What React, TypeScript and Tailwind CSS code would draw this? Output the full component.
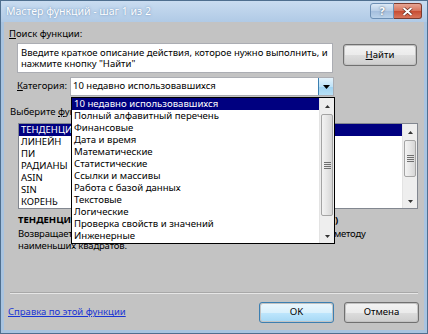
import React from "react";

const FONT = "font-['Noto_Sans','Liberation_Sans',sans-serif]";

function Arrow({ dir, size = 5 }: { dir: "up" | "down"; size?: number }) {
  const h = Math.ceil(size / 2) + 1;
  return (
    <svg width={size + 2} height={h} viewBox={`0 0 ${size + 2} ${h}`}>
      {dir === "up" ? (
        <polygon points={`1,${h} ${(size + 2) / 2},1 ${size + 1},${h}`} fill="#333" />
      ) : (
        <polygon points={`1,1 ${(size + 2) / 2},${h} ${size + 1},1`} fill="#333" />
      )}
    </svg>
  );
}

function Grip() {
  return (
    <div className="flex flex-col gap-[1px] items-center">
      <div className="w-[7px] h-[1px] bg-[#6f6f6f]" />
      <div className="w-[7px] h-[1px] bg-[#6f6f6f]" />
      <div className="w-[7px] h-[1px] bg-[#6f6f6f]" />
      <div className="w-[7px] h-[1px] bg-[#6f6f6f]" />
    </div>
  );
}

function ScrollBar({ thumbTop, thumbH }: { thumbTop: number; thumbH: number }) {
  return (
    <div className="w-[15px] h-full flex flex-col bg-[#eeeeee] border-l border-[#e3e3e3]">
      <div className="h-[15px] flex items-center justify-center shrink-0">
        <Arrow dir="up" />
      </div>
      <div className="flex-1 relative">
        <div
          className="absolute left-[1px] right-[1px] rounded-[2px] border border-[#a4a4a4] bg-gradient-to-r from-[#f3f3f3] via-[#e6e6e6] to-[#d6d6d6] flex items-center justify-center"
          style={{ top: thumbTop, height: thumbH }}
        >
          <Grip />
        </div>
      </div>
      <div className="h-[15px] flex items-center justify-center shrink-0">
        <Arrow dir="down" />
      </div>
    </div>
  );
}

function WinButton({ children, def = false, className = "" }: { children: React.ReactNode; def?: boolean; className?: string }) {
  return (
    <div
      className={`rounded-[3px] border ${def ? "border-[#3c7fb1]" : "border-[#707070]"} p-[1px] ${className}`}
    >
      <div
        className={`w-full h-full rounded-[2px] flex items-center justify-center text-[9.6px] text-black ${
          def
            ? "bg-[linear-gradient(#eaf6fd_0%,#d9f0fc_50%,#bee6fd_51%,#a7d9f5_100%)]"
            : "bg-[linear-gradient(#f2f2f2_0%,#ebebeb_50%,#dddddd_51%,#cfcfcf_100%)]"
        }`}
      >
        {children}
      </div>
    </div>
  );
}

const categories = [
  "10 недавно использовавшихся",
  "Полный алфавитный перечень",
  "Финансовые",
  "Дата и время",
  "Математические",
  "Статистические",
  "Ссылки и массивы",
  "Работа с базой данных",
  "Текстовые",
  "Логические",
  "Проверка свойств и значений",
  "Инженерные",
];

const funcs = ["ТЕНДЕНЦИЯ", "ЛИНЕЙН", "ПИ", "РАДИАНЫ", "ASIN", "SIN", "КОРЕНЬ"];

export default function App() {
  return (
    <div className={`${FONT} relative w-[428px] h-[334px] overflow-hidden bg-[#a9c4e0] flex flex-col border border-[#4f6f8f]`}>
      {/* Title bar */}
      <div className="h-[21px] shrink-0 flex items-center justify-between bg-[linear-gradient(#c9dcf0,#b0cae6)] pl-[5px] pr-[5px]">
        <span className="text-[10.5px] text-white [text-shadow:0_0_3px_#7f9fc4,0_0_1px_#7f9fc4] leading-none">
          Мастер функций - шаг 1 из 2
        </span>
        <div className="flex items-start self-start mt-[2px]">
          <div className="w-[24px] h-[16px] rounded-l-[3px] border border-[#6d8fb4] bg-[linear-gradient(#dce9f6,#b7cde6_50%,#a4bedd_51%,#bad2ea)] flex items-center justify-center text-[11px] font-bold text-white [text-shadow:0_0_2px_#345]">
            ?
          </div>
          <div className="w-[28px] h-[16px] rounded-r-[3px] border border-l-0 border-[#7a3a2e] bg-[linear-gradient(#e8a593,#d6735c_50%,#c74c32_51%,#d8745a)] flex items-center justify-center">
            <svg width="11" height="9" viewBox="0 0 11 9">
              <path d="M1.5 1 L9.5 8 M9.5 1 L1.5 8" stroke="#5a2015" strokeWidth="3.2" />
              <path d="M1.5 1 L9.5 8 M9.5 1 L1.5 8" stroke="#ffffff" strokeWidth="2" />
            </svg>
          </div>
        </div>
      </div>

      {/* Body */}
      <div className="flex-1 mx-[3px] mb-[3px] bg-[#c3c3c3] flex flex-col text-[9.5px] text-black">
        <div className="mt-[4px] ml-[5px] h-[15px] leading-[15px]">
          <span className="underline">П</span>оиск функции:
        </div>
        <div className="flex mt-[2px] ml-[13px]">
          <div className="w-[316px] h-[30px] bg-white border border-[#abadb3] pl-[3px] pt-[3px] leading-[11px] whitespace-nowrap">
            Введите краткое описание действия, которое нужно выполнить, и
            <br />
            нажмите кнопку "Найти"
          </div>
          <WinButton className="ml-[10px] mt-[1px] w-[74px] h-[22px]">
            <span>
              <span className="underline">Н</span>айти
            </span>
          </WinButton>
        </div>
        <div className="flex items-center mt-[4px] h-[19px]">
          <div className="ml-[13px] w-[53px]">
            <span className="underline">К</span>атегория:
          </div>
          <div className="w-[264px] h-[19px] bg-white border border-[#abadb3] flex items-center">
            <span className="pl-[2px] flex-1">10 недавно использовавшихся</span>
            <div className="w-[15px] h-[17px] bg-[linear-gradient(#e4f3fc,#bfe3f8_50%,#9fd3f2_51%,#b7e0f6)] border-l border-[#3c7fb1] flex items-center justify-center">
              <svg width="7" height="4" viewBox="0 0 7 4">
                <polygon points="0,0 7,0 3.5,4" fill="#000" />
              </svg>
            </div>
          </div>
        </div>
        <div className="mt-[9px] ml-[6px] h-[14px] leading-[14px]">
          Выберите <span className="underline">ф</span>ункцию:
        </div>
        <div className="mt-[4px] ml-[14px] w-[400px] h-[86px] bg-white border border-[#828790] flex">
          <div className="flex-1 flex flex-col">
            {funcs.map((f, i) => (
              <div
                key={f}
                className={`h-[12px] leading-[12px] pl-[2px] ${i === 0 ? "bg-[#000080] text-white" : ""}`}
              >
                {f}
              </div>
            ))}
          </div>
          <ScrollBar thumbTop={1} thumbH={37} />
        </div>
        <div className="mt-[4px] ml-[14px] h-[14px] leading-[14px] font-bold whitespace-nowrap flex">
          <span>ТЕНДЕНЦИ</span>
          <span className="w-[264px]">Я(изв_знач_y;изв_знач_x;нов_знач_x;конст</span>
          <span>)</span>
        </div>
        <div className="mt-[1px] ml-[14px] leading-[12px] w-[365px] tracking-[-0.18px]">
          Возвращает значения в соответствии с линейной аппроксимацией по методу наименьших квадратов.
        </div>
        <div className="flex-1" />
        <div className="mx-[6px] h-[1px] bg-[#a8a8a8] border-b border-[#e6e6e6] box-content" />
        <div className="flex items-center h-[36px] pt-[1px]">
          <span className="ml-[4px] text-[#1a35d4] underline">Справка по этой функции</span>
          <div className="flex-1" />
          <WinButton def className="w-[75px] h-[21px]">
            OK
          </WinButton>
          <WinButton className="ml-[10px] mr-[5px] w-[75px] h-[21px]">Отмена</WinButton>
        </div>
      </div>

      {/* Dropdown overlay */}
      <div className="absolute left-[70px] top-[96px] w-[264px] h-[147px] bg-white border border-black flex">
        <div className="flex-1 flex flex-col">
          {categories.map((c, i) => (
            <div
              key={c}
              className={`h-[12px] leading-[12px] pl-[2px] text-[9.6px] whitespace-nowrap ${
                i === 0 ? "bg-[#000080] text-white" : "text-black"
              }`}
            >
              {c}
            </div>
          ))}
        </div>
        <ScrollBar thumbTop={1} thumbH={102} />
      </div>
    </div>
  );
}
